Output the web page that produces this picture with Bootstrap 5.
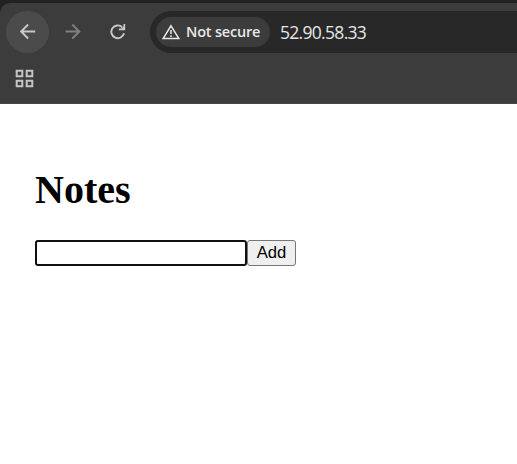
<!DOCTYPE html>
<html lang="en">
<head>
<meta charset="utf-8">
<title>Notes</title>
<link href="https://cdn.jsdelivr.net/npm/bootstrap@5.3.0/dist/css/bootstrap.min.css" rel="stylesheet">
<style>
body { height: 464px; background: #fff; }
.chrome-frame { background: #202221; padding-top: 3px; }
.chrome-bar { height: 101px; background: #3c3c3c; border-top-left-radius: 10px; border-bottom: 1px solid #484548; font-family: "Open Sans", "Noto Sans", sans-serif; }
.nav-tools { padding: 8px 0 0 6px; }
.tool-btn { width: 43px; height: 42px; margin-right: 2px; color: #c9c9c9; background: transparent; }
.tool-btn.is-active { background: #4b4b4b; }
.tool-btn.is-off { color: #808080; }
.address { height: 42px; margin-left: 9px; padding-left: 6px; background: #282828; border-radius: 21px 0 0 21px; }
.security { width: 114px; height: 30px; padding-left: 6px; background: #3c3c3c; color: #e8e8e8; font-size: 14.5px; font-weight: 600; letter-spacing: -.2px; line-height: 30px; }
.security span { margin-left: 6px; white-space: nowrap; }
.host { margin-left: 10px; padding-top: 1px; color: #e6e6e6; font-family: "Open Sans", "Noto Sans", sans-serif; font-size: 17.5px; line-height: 41px; letter-spacing: -.7px; }
.bookmarks { padding: 16px 0 0 15px; color: #c4c4c4; }
.notes-page { padding: 62px 35px 0; }
.notes-title { margin: 0 0 27px; color: #000; font: bold 40px/47px "Liberation Serif", "Times New Roman", serif; }
.note-input { width: 212px; height: 26px; border: 2px solid #101010; border-radius: 3px; outline: 0; background: #fff; }
.note-add { width: 49px; height: 26px; border: 1px solid #767676; border-radius: 3px; background: #efefef; color: #000; font: 16.667px/22px "Liberation Sans", Arial, sans-serif; }
</style>
<script src="https://cdn.jsdelivr.net/npm/bootstrap@5.3.0/dist/js/bootstrap.bundle.min.js"></script>
</head>
<body class="overflow-hidden">
<header class="chrome-frame">
  <div class="chrome-bar">
    <nav class="nav-tools d-flex">
      <button class="tool-btn is-active border-0 rounded-circle p-0 d-flex align-items-center justify-content-center flex-shrink-0" aria-label="Back">
        <svg width="16" height="16" viewBox="0 0 16 16" fill="none" stroke="currentColor" stroke-width="1.9"><path d="M15.2 7.5H1.4M8.1.5l-7 7 7 7"/></svg>
      </button>
      <button class="tool-btn is-off border-0 rounded-circle p-0 d-flex align-items-center justify-content-center flex-shrink-0" aria-label="Forward">
        <svg width="16" height="16" viewBox="0 0 16 16" fill="none" stroke="currentColor" stroke-width="1.9"><path d="M.5 7.5h13.8M7.3.5l7 7-7 7"/></svg>
      </button>
      <button class="tool-btn border-0 rounded-circle p-0 d-flex align-items-center justify-content-center flex-shrink-0" aria-label="Reload">
        <svg width="16" height="16" viewBox="0 0 16 16" fill="none" stroke="currentColor" stroke-width="1.9"><path d="M14 9.2A6.4 6.4 0 1 1 12.2 3.2"/><path d="M15.2 0v6.3H8.9V4.5h2.6l2-2V0z" fill="currentColor" stroke="none"/></svg>
      </button>
      <div class="address d-flex align-items-center flex-grow-1">
        <div class="security rounded-pill d-flex align-items-center flex-shrink-0">
          <svg class="flex-shrink-0" width="18" height="16" viewBox="0 0 18 16" fill="none" stroke="currentColor" stroke-width="1.5"><path d="M9 1.8 16.7 14.4H1.3zM9 6v4M9 11.2v1.7"/></svg>
          <span>Not secure</span>
        </div>
        <div class="host">52.90.58.33</div>
      </div>
    </nav>
    <div class="bookmarks d-flex">
      <svg width="19" height="19" viewBox="0 0 19 19" fill="none" stroke="currentColor" stroke-width="2"><path d="M1.7 1.7h5.6v5.6H1.7zM11.7 1.7h5.6v5.6h-5.6zM1.7 11.7h5.6v5.6H1.7zM11.7 11.7h5.6v5.6h-5.6z"/></svg>
    </div>
  </div>
</header>
<main class="notes-page">
  <h1 class="notes-title">Notes</h1>
  <form class="d-flex">
    <input class="note-input" type="text" aria-label="Note">
    <button class="note-add p-0" type="button">Add</button>
  </form>
</main>
</body>
</html>
